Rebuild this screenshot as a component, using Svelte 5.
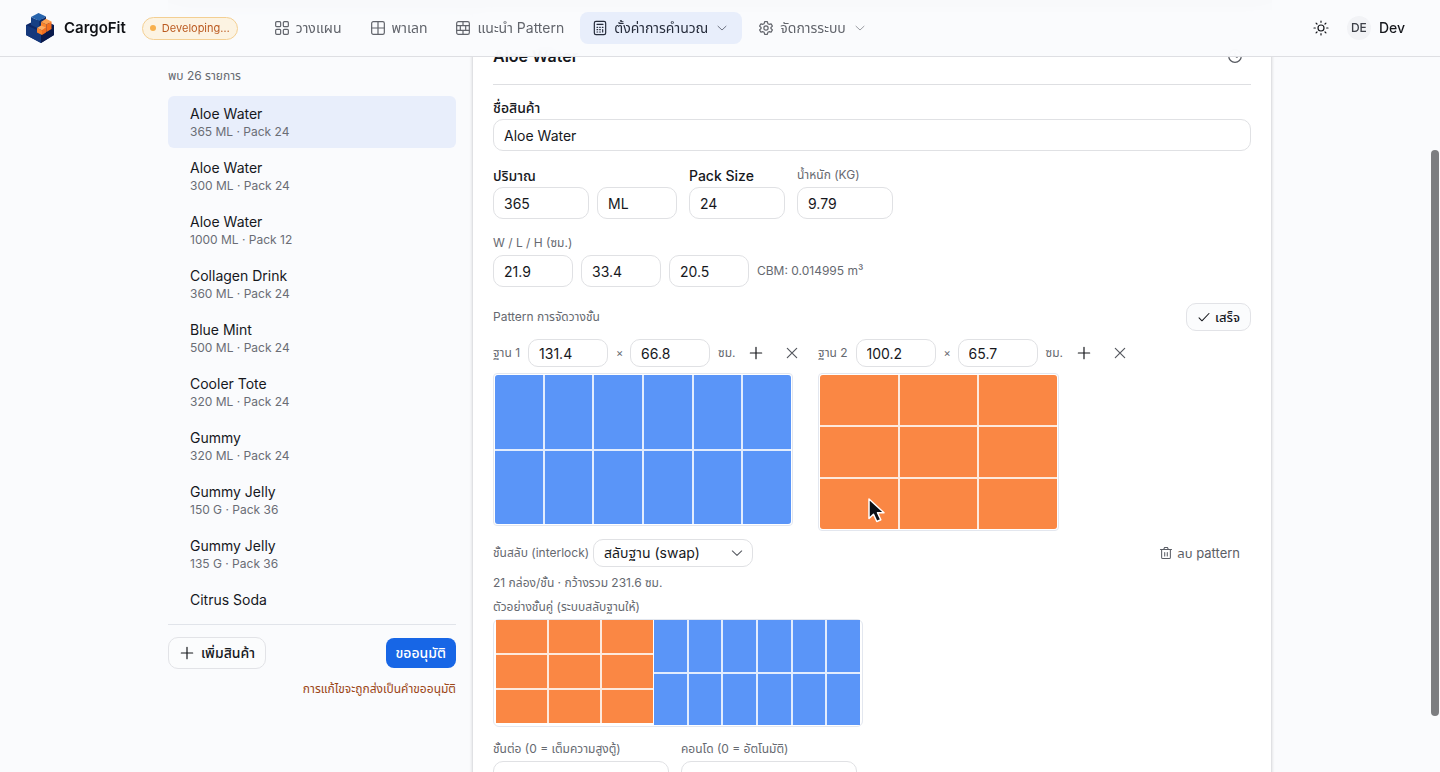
<script>
    const products = [
        { name: 'Aloe Water', detail: '365 ML · Pack 24' },
        { name: 'Aloe Water', detail: '300 ML · Pack 24' },
        { name: 'Aloe Water', detail: '1000 ML · Pack 12' },
        { name: 'Collagen Drink', detail: '360 ML · Pack 24' },
        { name: 'Blue Mint', detail: '500 ML · Pack 24' },
        { name: 'Cooler Tote', detail: '320 ML · Pack 24' },
        { name: 'Gummy', detail: '320 ML · Pack 24' },
        { name: 'Gummy Jelly', detail: '150 G · Pack 36' },
        { name: 'Gummy Jelly', detail: '135 G · Pack 36' },
        { name: 'Citrus Soda' }
    ];

    const navItems = [
        { label: 'วางแผน', icon: 'grid' },
        { label: 'พาเลท', icon: 'table' },
        { label: 'แนะนำ Pattern', icon: 'bricks' },
        { label: 'ตั้งค่าการคำนวณ', icon: 'calculator', menu: true, active: true },
        { label: 'จัดการระบบ', icon: 'gear', menu: true }
    ];

    const bases = [
        { id: 1, width: '131.4', length: '66.8', cols: 6, rows: 2, color: 'blue' },
        { id: 2, width: '100.2', length: '65.7', cols: 3, rows: 3, color: 'orange' }
    ];
    const swapped = [...bases].reverse();

    let selected = $state(0);
    let interlock = $state('swap');
</script>

{#snippet icon(name)}
    <svg class="icon" viewBox="0 0 24 24" aria-hidden="true">
        {#if name === 'grid'}
            <rect x="2.5" y="2.5" width="7.5" height="7.5" rx="1.5" />
            <rect x="14" y="2.5" width="7.5" height="7.5" rx="1.5" />
            <rect x="2.5" y="14" width="7.5" height="7.5" rx="1.5" />
            <rect x="14" y="14" width="7.5" height="7.5" rx="1.5" />
        {:else if name === 'table'}
            <rect x="2.5" y="2.5" width="19" height="19" rx="2.5" />
            <path d="M12 2.5v19M2.5 12h19" />
        {:else if name === 'bricks'}
            <rect x="2.5" y="2.5" width="19" height="19" rx="2.5" />
            <path d="M2.5 8.5h19M2.5 15.5h19M12 2.5v6M8 8.5v7M16 8.5v7M12 15.5v6" />
        {:else if name === 'calculator'}
            <rect x="3.5" y="2" width="17" height="20" rx="2.5" />
            <path d="M7.5 6.5h9M7.5 11h1M11.5 11h1M15.5 11h1M7.5 14.5h1M11.5 14.5h1M7.5 18h1M11.5 18h1M16 14.5v3.5" />
        {:else if name === 'gear'}
            <path d="M10 2.500h4l.8 3 1.800 1 3-.8 2 3.500-2.200 2.100v1.400l2.200 2.100-2 3.500-3-.8-1.800 1-.8 3h-4l-.8-3-1.800-1-3 .8-2-3.500 2.200-2.100v-1.400L2.400 9.200l2-3.500 3 .8 1.800-1z" />
            <circle cx="12" cy="12" r="3.2" />
        {:else if name === 'sun'}
            <circle cx="12" cy="12" r="4.500" />
            <path d="M12 1.500v2M12 20.500v2M1.500 12h2M20.500 12h2M4.600 4.600 6 6M18 18l1.400 1.400M4.600 19.400 6 18M18 6l1.400-1.400" />
        {:else if name === 'chevron'}
            <path d="m4 8.500 8 7.500 8-7.500" />
        {:else if name === 'plus'}
            <path d="M12 3.500v17M3.500 12h17" />
        {:else if name === 'close'}
            <path d="m5 5 14 14M19 5 5 19" />
        {:else if name === 'check'}
            <path d="m3.500 13.500 5 5L20.500 6" />
        {:else if name === 'history'}
            <circle cx="12" cy="12" r="9.5" />
            <path d="M12 7v5l3 2" />
        {:else if name === 'trash'}
            <path d="M2.500 6h19M8 6l1.500-3.500h5L16 6M4.500 6v13.500a2 2 0 0 0 2 2h11a2 2 0 0 0 2-2V6M9.800 11v6M14.200 11v6" />
        {/if}
    </svg>
{/snippet}

{#snippet boxes(base)}
    <div class="boxes {base.color}" style="grid-template-columns: repeat({base.cols}, 1fr)">
        {#each Array(base.cols * base.rows) as _}
            <i></i>
        {/each}
    </div>
{/snippet}

<div class="page">
    <header>
        <a class="brand" href="#home">
            <!-- stacked cargo boxes: navy base, blue box on top, two orange ones in front -->
            <svg viewBox="0 0 28 30" aria-hidden="true">
                <path d="M0 12 14 5l14 7v10l-13 8L0 22z" fill="#0d2766" />
                <path d="m0 12 15 7v11L0 22z" fill="#14387c" />
                <path d="m15 19 13-7v10l-13 8z" fill="#0a1a4c" />
                <path d="m5 4 8.500 4v8L5 12z" fill="#163f84" />
                <path d="M5 4 12.500 0 20 3.500 13.500 8z" fill="#2764ad" />
                <path d="m13.500 8 6.500-4.500V12l-6.500 4z" fill="#0f2a66" />
                <path d="m15 9 5.500 2.500V19L15 16z" fill="#fb842c" />
                <path d="m15 9 5-3.200L25.500 8.500l-5 3z" fill="#ffa04e" />
                <path d="m20.500 11.500 5-3V16l-5 3z" fill="#f26d1e" />
                <path d="m11 15 5 2.200V22l-5-2.500z" fill="#fb842c" />
                <path d="m11 15 4-2.500 5 2-4 2.700z" fill="#ffac62" />
                <path d="m16 17.200 4-2.700v5L16 22z" fill="#f26d1e" />
            </svg>
            <span>CargoFit</span>
        </a>
        <span class="stage"><i></i>Developing…</span>
        <nav>
            {#each navItems as item}
                <button class:active={item.active}>
                    {@render icon(item.icon)}
                    <span>{item.label}</span>
                    {#if item.menu}
                        <span class="caret">{@render icon('chevron')}</span>
                    {/if}
                </button>
            {/each}
        </nav>
        <button class="theme" aria-label="Theme">{@render icon('sun')}</button>
        <button class="user"><span class="avatar">DE</span>Dev</button>
    </header>

    <main>
        <div class="toolbar"></div>
        <div class="columns">
            <aside>
                <p class="count">พบ 26 รายการ</p>
                <ul>
                    {#each products as product, i}
                        <li>
                            <button class:selected={selected === i} onclick={() => (selected = i)}>
                                <span>{product.name}</span>
                                {#if product.detail}
                                    <span class="detail">{product.detail}</span>
                                {/if}
                            </button>
                        </li>
                    {/each}
                </ul>
                <div class="actions">
                    <button class="outline">{@render icon('plus')}เพิ่มสินค้า</button>
                    <button class="primary">ขออนุมัติ</button>
                </div>
                <p class="warning">การแก้ไขจะถูกส่งเป็นคำขออนุมัติ</p>
            </aside>

            <section class="card">
                <div class="card-head">
                    <h2>Aloe Water</h2>
                    <button aria-label="History">{@render icon('history')}</button>
                </div>

                <div class="field">
                    <label class="strong" for="name">ชื่อสินค้า</label>
                    <input id="name" value="Aloe Water" />
                </div>

                <div class="row">
                    <div class="field">
                        <label class="strong" for="volume">ปริมาณ</label>
                        <div class="group">
                            <input id="volume" class="wide" value="365" />
                            <input aria-label="Unit" class="small" value="ML" />
                        </div>
                    </div>
                    <div class="field">
                        <label class="strong" for="pack">Pack Size</label>
                        <input id="pack" class="wide" value="24" />
                    </div>
                    <div class="field">
                        <label for="weight">น้ำหนัก (KG)</label>
                        <input id="weight" class="wide" value="9.79" />
                    </div>
                </div>

                <div class="field">
                    <label for="w">W / L / H (ซม.)</label>
                    <div class="group">
                        <input id="w" class="small" value="21.9" />
                        <input aria-label="L" class="small" value="33.4" />
                        <input aria-label="H" class="small" value="20.5" />
                        <span class="muted">CBM: 0.014995 m³</span>
                    </div>
                </div>

                <div class="between">
                    <span class="muted">Pattern การจัดวางชั้น</span>
                    <button class="outline done">{@render icon('check')}เสร็จ</button>
                </div>

                <div class="bases">
                    {#each bases as base}
                        <div class="base">
                            <div class="group">
                                <label for="base-{base.id}">ฐาน {base.id}</label>
                                <input id="base-{base.id}" class="small" value={base.width} />
                                <span class="times">×</span>
                                <input aria-label="Length {base.id}" class="small" value={base.length} />
                                <span class="muted unit">ซม.</span>
                                <button class="tool" aria-label="Add">{@render icon('plus')}</button>
                                <button class="tool light" aria-label="Remove">{@render icon('close')}</button>
                            </div>
                            <div class="diagram {base.color}-frame">{@render boxes(base)}</div>
                        </div>
                    {/each}
                </div>

                <div class="between">
                    <div class="group interlock">
                        <label for="interlock">ชั้นสลับ (interlock)</label>
                        <div class="select">
                            <select id="interlock" bind:value={interlock}>
                                <option value="swap">สลับฐาน (swap)</option>
                                <option value="none">-</option>
                            </select>
                            {@render icon('chevron')}
                        </div>
                    </div>
                    <button class="delete">{@render icon('trash')}ลบ pattern</button>
                </div>

                <p class="muted summary">21 กล่อง/ชั้น · กว้างรวม 231.6 ซม.</p>
                <p class="muted caption">ตัวอย่างชั้นคู่ (ระบบสลับฐานให้)</p>
                <div class="preview">
                    {#each swapped as base}
                        <div class="part {base.color}-part">{@render boxes(base)}</div>
                    {/each}
                </div>

                <div class="row">
                    <div class="field">
                        <label for="layers">ชั้นต่อ (0 = เต็มความสูงตู้)</label>
                        <input id="layers" class="large" />
                    </div>
                    <div class="field">
                        <label for="condo">คอนโด (0 = อัตโนมัติ)</label>
                        <input id="condo" class="large" />
                    </div>
                </div>
            </section>
        </div>
    </main>

    <div class="scrollbar"></div>
    <svg class="pointer" viewBox="0 0 20 26" aria-hidden="true">
        <path d="M2 1.500v19.500l4.500-4.200 3.300 7.200 4-1.800-3.300-7H17z" fill="#0b0f14" stroke="#fff" stroke-width="1.5" stroke-linejoin="round" />
    </svg>
</div>

<style>
    :global(body) {
        margin: 0;
        background: #fafbfd;
    }
    .page {
        height: 100vh;
        overflow: hidden;
        color: #16181d;
        font-family: Inter, "Noto Sans Thai", "IBM Plex Sans Thai", sans-serif;
        font-size: 14px;
        line-height: 20px;
    }
    .page * {
        box-sizing: border-box;
    }
    button, input, select {
        font: inherit;
        color: inherit;
    }
    button {
        display: flex;
        align-items: center;
        border: 0;
        padding: 0;
        background: none;
        white-space: nowrap;
        cursor: pointer;
    }
    p, h2, ul {
        margin: 0;
        padding: 0;
    }
    .icon {
        width: 16px;
        height: 16px;
        flex: none;
        fill: none;
        stroke: currentColor;
        stroke-width: 1.8;
        stroke-linecap: round;
        stroke-linejoin: round;
    }

    header {
        position: fixed;
        top: 0;
        left: 0;
        right: 0;
        z-index: 2;
        display: flex;
        align-items: center;
        height: 57px;
        padding: 0 24px 0 26px;
        background: rgba(250, 251, 253, 0.95);
        border-bottom: 1px solid #dedfe3;
        backdrop-filter: blur(12px);
    }
    .brand {
        display: flex;
        align-items: center;
        gap: 10px;
        color: #101216;
        font-size: 15px;
        font-weight: 600;
        text-decoration: none;
    }
    .brand svg {
        width: 28px;
        height: 30px;
    }
    .stage {
        display: flex;
        align-items: center;
        gap: 6px;
        height: 23px;
        margin-left: 16px;
        padding: 0 7px;
        border: 1px solid #f3cf93;
        border-radius: 12px;
        background: #fcf3e2;
        color: #bb5a20;
        font-size: 11px;
    }
    .stage i {
        width: 6px;
        height: 6px;
        border-radius: 50%;
        background: #f8b04c;
    }
    nav {
        display: flex;
        gap: 4px;
        margin-left: 24px;
        margin-right: auto;
    }
    nav button {
        gap: 6px;
        height: 32px;
        padding: 0 12px;
        border-radius: 8px;
        color: #62656c;
    }
    nav button.active {
        background: #e8eefb;
        color: #272d3c;
    }
    .caret {
        display: flex;
        justify-content: center;
        width: 16px;
        opacity: 0.7;
    }
    .caret .icon {
        width: 12px;
        height: 12px;
    }
    .theme {
        margin-right: 18px;
    }
    .user {
        gap: 8px;
        margin-right: 11px;
        font-weight: 500;
    }
    .avatar {
        display: grid;
        place-items: center;
        width: 24px;
        height: 24px;
        border-radius: 50%;
        background: #f2f3f6;
        color: #3d4048;
        font-size: 12px;
    }

    main {
        max-width: 1104px;
        margin: 0 auto;
    }
    .toolbar {
        height: 10px;
        background: #c4c4c4;
    }
    .columns {
        display: grid;
        grid-template-columns: 288px 1fr;
        gap: 16px;
    }
    .count {
        margin-top: 56px;
        margin-bottom: 10px;
        color: #666970;
        font-size: 12px;
    }
    ul {
        display: flex;
        flex-direction: column;
        gap: 2px;
        height: calc(100vh - 256px);
        overflow: hidden;
        list-style: none;
    }
    li button {
        flex-direction: column;
        align-items: flex-start;
        width: 100%;
        padding: 8px 22px;
        border-radius: 6px;
    }
    li button.selected {
        background: #e8eefb;
    }
    .detail {
        color: #6a6d75;
        font-size: 12px;
        line-height: 16px;
    }
    .actions {
        display: flex;
        justify-content: space-between;
        align-items: center;
        margin-top: 12px;
        padding-top: 12px;
        border-top: 1px solid #e1e4ea;
    }
    .outline {
        gap: 6px;
        height: 32px;
        padding: 0 10px;
        border: 1px solid #e2e3e7;
        border-radius: 10px;
        background: #fbfcfd;
        font-weight: 500;
    }
    .primary {
        height: 30px;
        padding: 0 10px;
        border-radius: 8px;
        background: #1766e6;
        color: #fff;
        font-weight: 500;
    }
    .warning {
        margin-top: 10px;
        color: #9a4516;
        font-size: 12px;
        text-align: right;
    }

    .card {
        padding: 36px 20px 20px;
        border: 1px solid #e0e1e4;
        border-top: 0;
        background: #fff;
        box-shadow: 0 0 3px rgba(0, 0, 0, 0.14);
    }
    .card-head {
        display: flex;
        justify-content: space-between;
        align-items: center;
        padding-bottom: 18px;
        border-bottom: 1px solid #dedfe2;
        margin-bottom: 14px;
    }
    .card-head button {
        margin-right: 8px;
        color: #55585f;
    }
    h2 {
        font-size: 16px;
        font-weight: 600;
        line-height: 20px;
    }
    .field {
        margin-bottom: 16px;
    }
    .field > label {
        display: block;
        height: 20px;
        line-height: 16px;
    }
    label {
        color: #666970;
        font-size: 12px;
        white-space: nowrap;
    }
    .field > label.strong {
        color: #16181d;
        font-size: 14px;
        font-weight: 500;
        line-height: 18px;
    }
    input, select {
        display: block;
        width: 100%;
        height: 32px;
        padding: 0 10px;
        border: 1px solid #e0e1e4;
        border-radius: 10px;
        background: #fff;
    }
    input.wide {
        width: 96px;
    }
    input.small {
        width: 80px;
    }
    input.large {
        width: 176px;
    }
    .row {
        display: flex;
        gap: 12px;
    }
    .group {
        display: flex;
        align-items: center;
        gap: 8px;
    }
    .muted {
        color: #666970;
        font-size: 12px;
        white-space: nowrap;
    }
    .between {
        display: flex;
        justify-content: space-between;
        align-items: center;
    }
    .done {
        gap: 4px;
        height: 28px;
        font-size: 13px;
    }
    .done .icon {
        width: 14px;
        height: 14px;
    }
    .bases {
        display: flex;
        align-items: flex-start;
        gap: 12px;
        margin: 8px 0;
    }
    .base input, .select select {
        height: 28px;
    }
    .base label {
        min-width: 27px;
    }
    .times {
        width: 6px;
        color: #666970;
        font-size: 11px;
    }
    .unit {
        width: 16px;
    }
    .tool {
        justify-content: center;
        width: 28px;
        height: 28px;
    }
    .tool.light {
        color: #55585f;
    }
    .diagram {
        display: flex;
        margin-top: 6px;
        padding: 1px;
        border: 1px solid #e3e7ef;
        border-radius: 4px;
    }
    .diagram .boxes {
        border-radius: 3px;
        overflow: hidden;
    }
    .blue-frame {
        width: 300px;
        height: 153px;
    }
    .orange-frame {
        width: 241px;
        height: 158px;
    }
    .boxes {
        display: grid;
        flex: 1;
        gap: 2px;
    }
    .boxes.blue {
        background: #e2ecfd;
    }
    .boxes.orange {
        background: #fde9dc;
    }
    .blue i {
        background: #5a95f8;
    }
    .orange i {
        background: #fa8744;
    }
    .interlock {
        gap: 4px;
    }
    .select {
        position: relative;
        width: 160px;
    }
    .select select {
        appearance: none;
    }
    .select .icon {
        position: absolute;
        top: 7px;
        right: 9px;
        width: 14px;
        height: 14px;
        color: #55585f;
        pointer-events: none;
    }
    .delete {
        gap: 4px;
        margin-right: 11px;
        color: #5b5e66;
        font-size: 13px;
    }
    .delete .icon {
        width: 14px;
        height: 14px;
    }
    .summary {
        margin-top: 6px;
    }
    .caption {
        margin-top: 4px;
    }
    .preview {
        display: flex;
        align-items: flex-start;
        gap: 1px;
        width: 370px;
        height: 108px;
        margin-top: 2px;
        margin-bottom: 14px;
        padding: 0 2px;
        border: 1px solid #e3e7ef;
        border-radius: 6px;
    }
    .part {
        display: flex;
    }
    .orange-part {
        flex: 157;
        height: 103px;
    }
    .blue-part {
        flex: 206;
        height: 105px;
    }

    .scrollbar {
        position: fixed;
        top: 150px;
        right: 1px;
        z-index: 3;
        width: 8px;
        height: 566px;
        border-radius: 4px;
        background: #7c7d80;
    }
    .pointer {
        position: fixed;
        top: 497px;
        left: 867px;
        width: 20px;
        height: 27px;
    }
</style>
